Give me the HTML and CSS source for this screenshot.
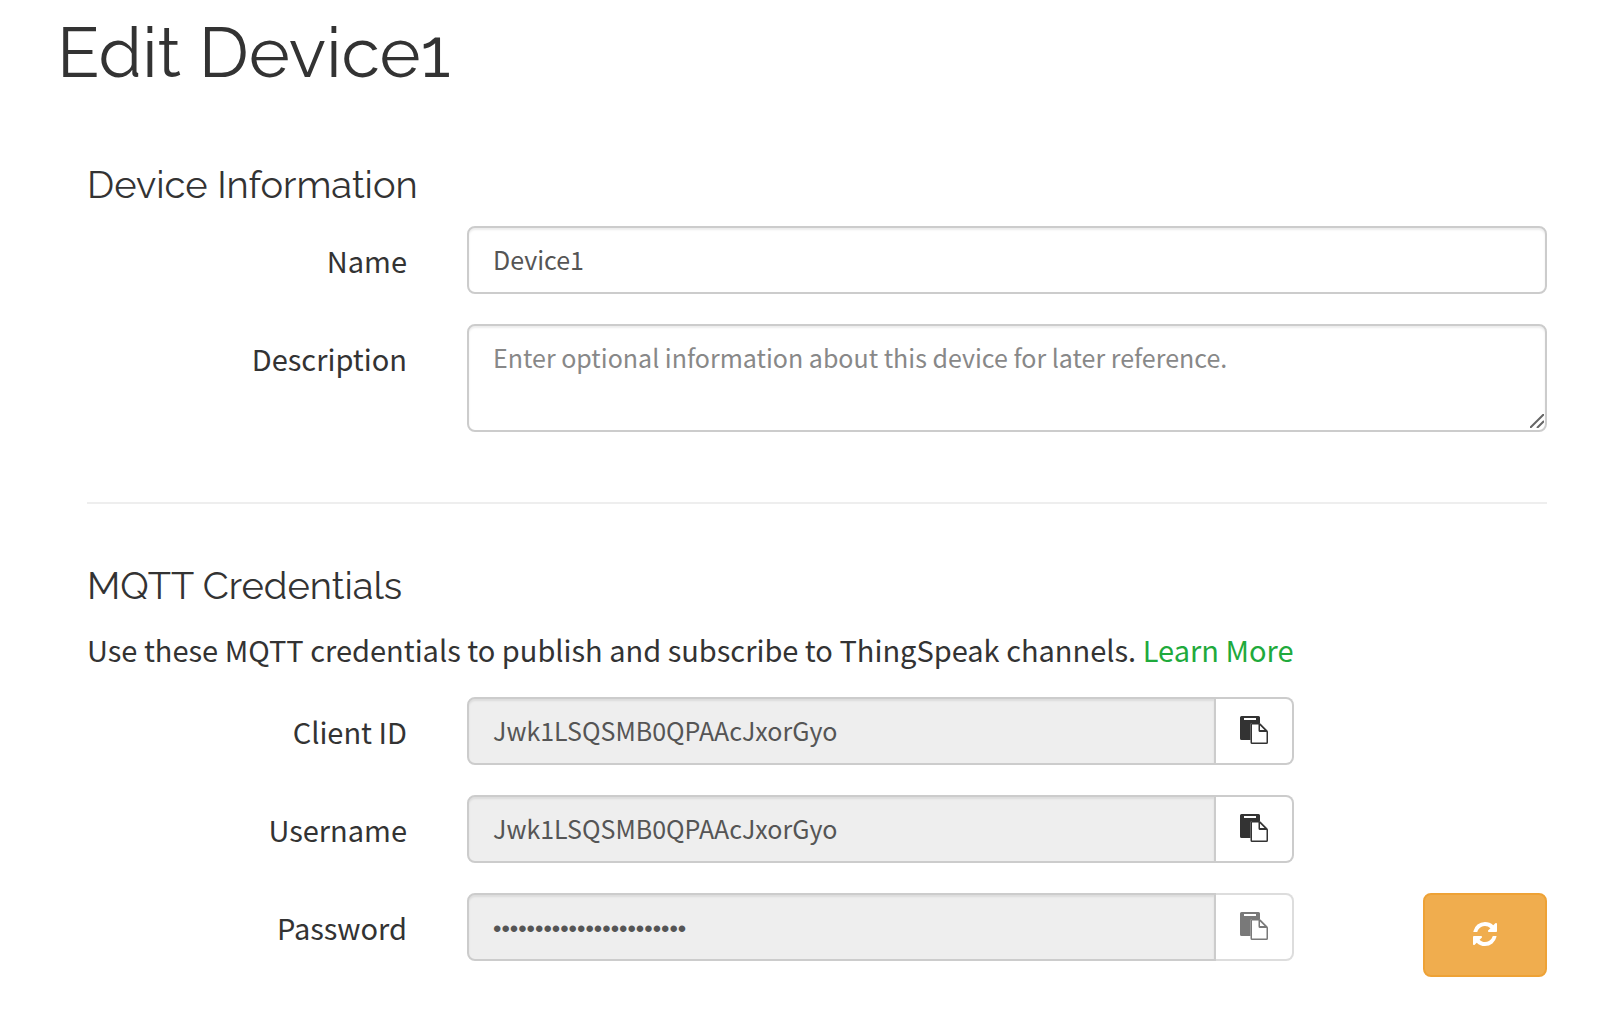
FILE: index.html
```html
<!DOCTYPE html>
<html lang="en">
<head>
  <meta charset="UTF-8">
  <meta name="viewport" content="width=device-width, initial-scale=1.0">
  <title>Edit Device1</title>
  <link rel="stylesheet" href="styles.css">
</head>
<body>
  <!-- shared icons -->
  <svg class="sprite" aria-hidden="true">
    <symbol id="icon-paste" viewBox="0 0 28 28">
      <path fill="currentColor" fill-rule="evenodd" d="M1.500 0h17q1.500 0 1.500 1.500V7.500l-1-.5h-7q-1.500 0-1.500 1.500V24H1.500Q0 24 0 22.500V1.500Q0 0 1.500 0zM4 2v2h12V2z"/>
      <path fill="currentColor" fill-rule="evenodd" d="M12 7h7q1 0 2 1l6 6q1 1 1 2v10.500q0 1.500-1.500 1.500h-14.500q-1.500 0-1.500-1.500V8.500Q10.500 7 12 7zM12 8.500v18h14.500V16h-6.500q-1.500 0-1.500-1.500V8.500zM20 9.500V14h4.500z"/>
    </symbol>
    <symbol id="icon-refresh" viewBox="0 0 1536 1536">
      <path fill="currentColor" d="M1511 928q0 5-1 7-64 268-268 434.500T764 1536q-146 0-282.500-55T238 1324l-129 129q-19 19-45 19t-45-19-19-45V960q0-26 19-45t45-19h448q26 0 45 19t19 45-19 45l-137 137q71 66 161 102t187 36q134 0 250-65t186-179q11-17 53-117 8-23 30-23h192q13 0 22.500 9.500t9.500 22.500zm25-800v448q0 26-19 45t-45 19h-448q-26 0-45-19t-19-45 19-45l138-138Q969 256 768 256q-134 0-250 65T332 500q-11 17-53 117-8 23-30 23H50q-13 0-22.500-9.500T18 608v-7q65-268 270-434.500T768 0q146 0 284 55.500T1297 212l130-129q19-19 45-19t45 19 19 45z"/>
    </symbol>
  </svg>

  <div class="container">
    <h1>Edit Device1</h1>

    <form>
      <h2>Device Information</h2>
      <div class="row">
        <label for="name">Name</label>
        <div class="col-9">
          <input type="text" id="name" class="form-control" value="Device1">
        </div>
      </div>
      <div class="row">
        <label for="description">Description</label>
        <div class="col-9">
          <div class="resizable">
            <textarea id="description" class="form-control" placeholder="Enter optional information about this device for later reference."></textarea>
            <svg class="grip" viewBox="0 0 14 14" aria-hidden="true"><path d="M0 14L14 0M7 14l7-7"/></svg>
          </div>
        </div>
      </div>

      <hr>

      <h2>MQTT Credentials</h2>
      <p>Use these MQTT credentials to publish and subscribe to ThingSpeak channels. <a href="#">Learn More</a></p>
      <div class="row">
        <label for="client-id">Client ID</label>
        <div class="col-7 input-group">
          <input type="text" id="client-id" class="form-control" value="Jwk1LSQSMB0QPAAcJxorGyo" readonly>
          <button type="button" class="btn-copy" aria-label="Copy client ID"><svg><use href="#icon-paste"/></svg></button>
        </div>
      </div>
      <div class="row">
        <label for="username">Username</label>
        <div class="col-7 input-group">
          <input type="text" id="username" class="form-control" value="Jwk1LSQSMB0QPAAcJxorGyo" readonly>
          <button type="button" class="btn-copy" aria-label="Copy username"><svg><use href="#icon-paste"/></svg></button>
        </div>
      </div>
      <div class="row">
        <label for="password">Password</label>
        <div class="col-7 input-group">
          <input type="password" id="password" class="form-control" value="abcdefghijklmnopqrstuvw" readonly>
          <button type="button" class="btn-copy" aria-label="Copy password" disabled><svg><use href="#icon-paste"/></svg></button>
        </div>
        <div class="col-2">
          <button type="button" class="btn-refresh" aria-label="Regenerate password"><svg><use href="#icon-refresh"/></svg></button>
        </div>
      </div>
    </form>
  </div>
</body>
</html>
```

FILE: styles.css
```css
*{
  box-sizing: border-box;
}
body{
  margin: 0;
  background: #fff;
  color: #333;
  font-family: "Noto Sans CJK SC", "Noto Sans", sans-serif;
  font-size: 29px;
  line-height: 44px;
}
.sprite{
  position: absolute;
  width: 0;
  height: 0;
}
.container{
  padding: 12px 33px 40px 57px;
}
h1, h2{
  margin: 0;
  font-family: Raleway, Lato, sans-serif;
  font-weight: 400;
}
h1{
  margin-bottom: 72px;
  font-size: 70px;
  line-height: 80px;
}
h2{
  margin: 0 30px 20px;
  font-size: 38px;
  line-height: 42px;
}
p{
  margin: 0 30px 26px;
}
a{
  color: #1faa3c;
  text-decoration: none;
}
hr{
  margin: 70px 30px 61px;
  border: 0;
  border-top: 2px solid #eee;
}

/* form rows, 12 columns */
.row{
  display: flex;
  align-items: flex-start;
  margin-bottom: 30px;
}
.row label{
  width: 25%;
  padding: 12px 30px 0;
  text-align: right;
}
.col-9{
  width: 75%;
  padding: 0 30px;
}
.col-7{
  width: 58.3333%;
  padding: 0 30px;
}
.col-2{
  width: 16.6667%;
  padding: 0 30px;
  text-align: right;
}
.form-control{
  display: block;
  width: 100%;
  height: 68px;
  padding: 11px 24px 13px;
  border: 2px solid #ccc;
  border-radius: 8px;
  background: #fff;
  box-shadow: inset 0 2px 2px rgba(0, 0, 0, 0.075);
  color: #555;
  font-family: inherit;
  font-size: 25px;
  line-height: 40px;
}
.form-control::placeholder{
  color: #888;
}
.form-control[readonly]{
  background: #eee;
}
.form-control[type="password"]{
  padding: 14px 24px 10px;
  font-family: "Liberation Sans", Arial, sans-serif;
  font-size: 24px;
}
textarea.form-control{
  height: 108px;
  resize: vertical;
}
textarea::-webkit-resizer{
  background: transparent;
}

/* resize handle on the textarea corner */
.resizable{
  position: relative;
}
.grip{
  position: absolute;
  right: 3px;
  bottom: 4px;
  width: 14px;
  height: 14px;
  fill: none;
  stroke: #666;
  stroke-width: 2;
  pointer-events: none;
}

/* input + copy button */
.input-group{
  display: flex;
}
.input-group .form-control{
  flex: 1;
  min-width: 0;
  border-radius: 8px 0 0 8px;
}
.btn-copy{
  display: flex;
  align-items: center;
  justify-content: center;
  width: 78px;
  height: 68px;
  padding: 0 0 2px;
  border: 2px solid #ccc;
  border-left: 0;
  border-radius: 0 8px 8px 0;
  background: #fff;
  color: #333;
}
.btn-copy svg{
  width: 28px;
  height: 28px;
}
.btn-copy:disabled{
  opacity: 0.65;
}
.btn-refresh{
  display: inline-flex;
  align-items: center;
  justify-content: center;
  width: 124px;
  height: 84px;
  padding: 0 0 2px;
  border: 2px solid #eea236;
  border-radius: 8px;
  background: #f0ad4e;
  color: #fff;
  vertical-align: top;
}
.btn-refresh svg{
  width: 24px;
  height: 24px;
}
```
